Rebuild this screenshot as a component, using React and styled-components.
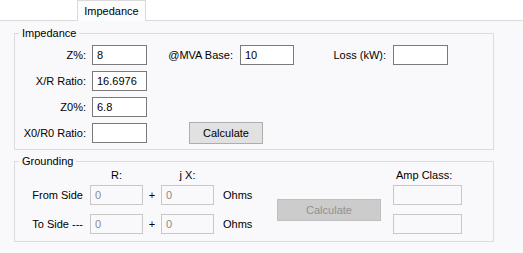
import React from 'react';
import styled, { createGlobalStyle } from 'styled-components';

const GlobalStyle = createGlobalStyle`
  html, body {
    margin: 0;
    padding: 0;
    background: #ffffff;
  }
  body {
    font-family: "Liberation Sans", Arial, sans-serif;
    font-size: 11px;
    color: #000;
  }
`;

const Window = styled.div`
  width: 523px;
  height: 253px;
  display: flex;
  flex-direction: column;
  overflow: hidden;
`;

const TabStrip = styled.div`
  height: 20px;
  display: flex;
  padding-left: 77px;
  border-bottom: 1px solid #dadada;
`;

const Tab = styled.div`
  width: 67px;
  height: 20px;
  margin-bottom: -1px;
  border: 1px solid #dadada;
  border-bottom: none;
  background: #fcfcfd;
  display: flex;
  align-items: center;
  justify-content: center;
  line-height: 13px;
`;

const Panel = styled.div`
  flex: 1;
  background: #f9f9fb;
  padding: 6px 0 0 14px;
  display: flex;
  flex-direction: column;
  gap: 5px;
`;

const Group = styled.fieldset`
  width: 478px;
  margin: 0;
  padding: ${p => p.$pad};
  min-width: 0;
  border: 1px solid #dcdcdc;
`;

const Legend = styled.legend`
  margin-left: 4px;
  padding: 0 3px;
  line-height: 13px;
`;

const ImpedanceGrid = styled.div`
  display: grid;
  grid-template-columns: 77px 55px 93px 54px 99px 55px;
  grid-auto-rows: 20px;
  row-gap: 6px;
`;

const GroundGrid = styled.div`
  display: grid;
  grid-template-columns: 75px 53px 18px 53px 63px 104px 12px 69px;
  grid-template-rows: 17px 29px 20px;
  align-items: start;
`;

const Label = styled.div`
  grid-column: ${p => p.$col || 'auto'};
  grid-row: ${p => p.$row || 'auto'};
  height: 20px;
  display: flex;
  align-items: center;
  justify-content: ${p => (p.$left ? 'flex-start' : p.$center ? 'center' : 'flex-end')};
  padding-right: ${p => p.$pr || 0}px;
  padding-left: ${p => p.$pl || 0}px;
  white-space: nowrap;
`;

const Header = styled.div`
  grid-row: 1;
  grid-column: ${p => p.$col};
  line-height: 13px;
  padding-top: 1px;
  text-align: ${p => (p.$left ? 'left' : 'center')};
  padding-left: ${p => p.$pl || 0}px;
  white-space: nowrap;
`;

const Field = styled.input`
  grid-column: ${p => p.$col || 'auto'};
  grid-row: ${p => p.$row || 'auto'};
  box-sizing: border-box;
  width: 100%;
  height: 20px;
  margin: 0;
  padding: 0 4px;
  border: 1px solid ${p => (p.disabled ? '#c8c8c8' : '#7a7a7a')};
  background: ${p => (p.disabled ? '#f9f9fb' : '#ffffff')};
  color: ${p => (p.disabled ? '#8a8a8a' : '#000')};
  font: inherit;
  outline: none;
`;

const Button = styled.button`
  grid-column: ${p => p.$col};
  grid-row: ${p => p.$row || 'auto'};
  box-sizing: border-box;
  height: 22px;
  width: ${p => p.$w}px;
  margin: 0 0 0 ${p => p.$ml || 0}px;
  padding: 0;
  border: 1px solid ${p => (p.disabled ? '#bfbfbf' : '#adadad')};
  background: ${p => (p.disabled ? '#cccccc' : '#e1e1e1')};
  color: ${p => (p.disabled ? '#919191' : '#000')};
  font: inherit;
  align-self: center;
`;

const sides = [
  { label: 'From Side', row: 2 },
  { label: 'To Side ---', row: 3 },
];

export default function App() {
  return (
    <Window>
      <GlobalStyle />
      <TabStrip>
        <Tab>Impedance</Tab>
      </TabStrip>
      <Panel>
        <Group $pad="5px 0 6px 0">
          <Legend>Impedance</Legend>
          <ImpedanceGrid>
            <Label $col={1} $pr={6}>Z%:</Label>
            <Field defaultValue="8" />
            <Label $pr={7}>@MVA Base:</Label>
            <Field defaultValue="10" />
            <Label $pr={7}>Loss (kW):</Label>
            <Field defaultValue="" />

            <Label $col={1} $pr={6}>X/R Ratio:</Label>
            <Field defaultValue="16.6976" />

            <Label $col={1} $pr={6}>Z0%:</Label>
            <Field defaultValue="6.8" />

            <Label $col={1} $pr={6}>X0/R0 Ratio:</Label>
            <Field defaultValue="" />
            <Button $col="3 / 5" $w={74} $ml={42}>Calculate</Button>
          </ImpedanceGrid>
        </Group>

        <Group $pad="0 0 7px 0">
          <Legend>Grounding</Legend>
          <GroundGrid>
            <Header $col={2}>R:</Header>
            <Header $col={4}>j X:</Header>
            <Header $col={8} $left $pl={3}>Amp Class:</Header>

            {sides.map(s => (
              <React.Fragment key={s.label}>
                <Label $row={s.row} $col={1} $pr={7}>{s.label}</Label>
                <Field disabled $row={s.row} $col={2} defaultValue="0" />
                <Label $row={s.row} $col={3} $center>+</Label>
                <Field disabled $row={s.row} $col={4} defaultValue="0" />
                <Label $row={s.row} $col={5} $left $pl={9}>Ohms</Label>
                <Field disabled $row={s.row} $col={8} defaultValue="" />
              </React.Fragment>
            ))}
            <Button disabled $col={6} $row="2 / 4" $w={104}>Calculate</Button>
          </GroundGrid>
        </Group>
      </Panel>
    </Window>
  );
}
